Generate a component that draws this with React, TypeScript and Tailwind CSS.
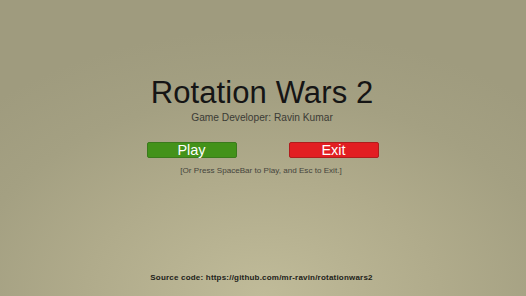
export default function App() {
  return (
    <div
      className="h-[296px] w-[526px] overflow-hidden flex flex-col items-center font-['Liberation_Sans',Arial,sans-serif]"
      style={{
        background:
          'radial-gradient(ellipse 75% 90% at 50% 100%, #c0bb99 0%, #b0ab8b 45%, #a4a082 75%, #9f9b7e 100%)',
      }}
    >
      <h1 className="mt-[75px] ml-[-2px] text-[31px] leading-[36px] text-[#151515] tracking-[0.1px]">
        Rotation Wars 2
      </h1>
      <p className="mt-[0px] ml-[-2px] text-[10.2px] leading-[14px] text-[#3b3b35]">
        Game Developer: Ravin Kumar
      </p>

      <div className="mt-[17px] flex gap-[52px] ml-[-1px]">
        <button
          type="button"
          className="w-[90px] h-[16px] rounded-[2px] border border-[#3a7a1c] bg-[#43921a] text-white text-[14.5px] leading-[14px] flex items-center justify-center"
        >
          Play
        </button>
        <button
          type="button"
          className="w-[90px] h-[16px] rounded-[2px] border border-[#b01c1c] bg-[#e21e22] text-white text-[14.5px] leading-[14px] flex items-center justify-center"
        >
          Exit
        </button>
      </div>

      <p className="mt-[7px] ml-[-4px] text-[8.1px] leading-[12px] text-[#45443c]">
        [Or Press SpaceBar to Play, and Esc to Exit.]
      </p>

      <p className="mt-auto mb-[12px] ml-[-3px] text-[8px] leading-[12px] font-semibold tracking-[0.2px] text-[#222219]">
        Source code: https://github.com/mr-ravin/rotationwars2
      </p>
    </div>
  );
}
